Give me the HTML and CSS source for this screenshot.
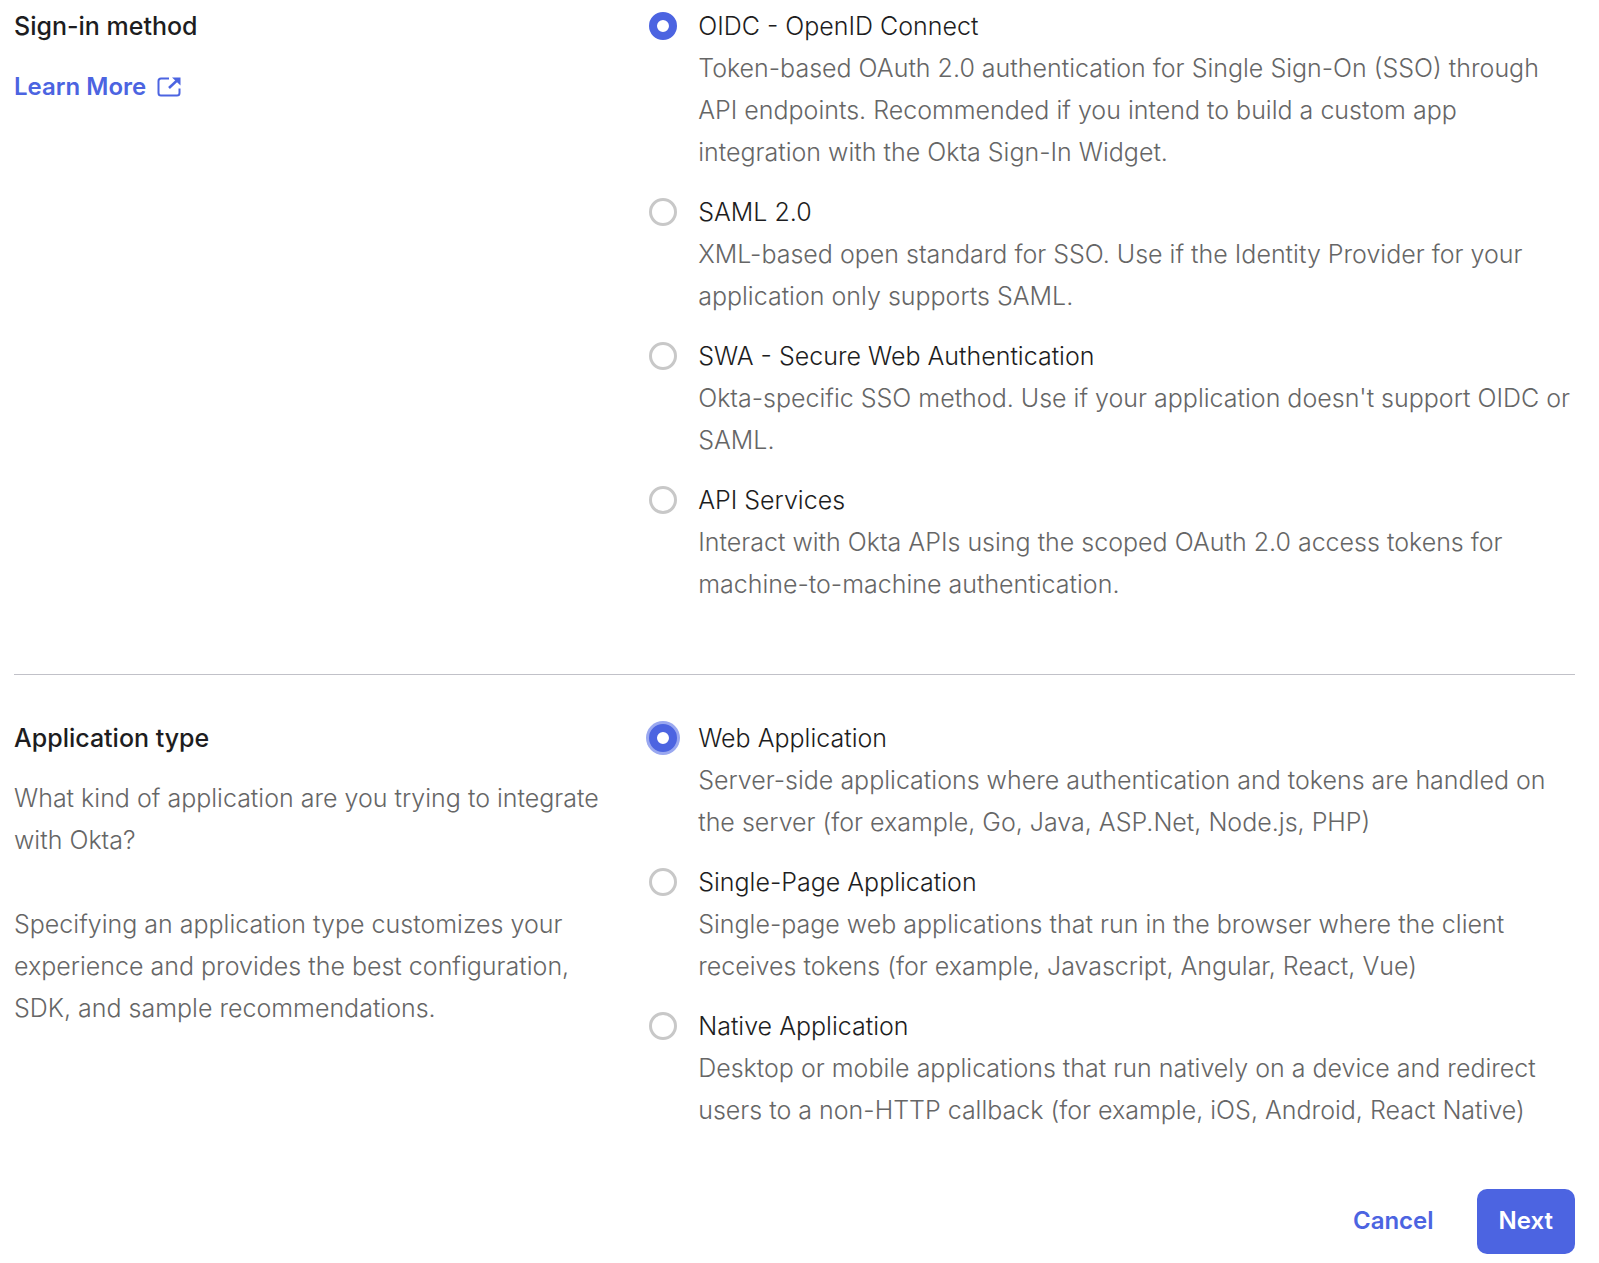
FILE: index.html
```
<!DOCTYPE html>
<html lang="en">
<head>
<meta charset="utf-8">
<meta name="viewport" content="width=device-width, initial-scale=1">
<title>Create a new app integration</title>
<link rel="stylesheet" href="styles.css">
</head>

<body>
<form class="wizard">
  <section class="section" role="radiogroup" aria-labelledby="method-title">
    <div class="intro">
      <h2 id="method-title">Sign-in method</h2>
      <a class="learn-more" href="#">Learn More
        <svg class="external" viewBox="0 0 24 20" aria-hidden="true">
          <path d="M12 1.500H4Q1.500 1.500 1.500 4V16Q1.500 18.500 4 18.500H20Q22.500 18.500 22.500 16V11.500" fill="none" stroke="currentColor" stroke-width="2"/>
          <path d="M12 11L20 3.500" fill="none" stroke="currentColor" stroke-width="2.500"/>
          <path d="M15 0.500H23.500V8.500Z" fill="currentColor"/>
        </svg>
      </a>
    </div>
    <div class="options">
      <div class="option">
        <input type="radio" name="method" id="oidc" aria-describedby="oidc-hint" checked>
        <div>
          <label for="oidc">OIDC - OpenID Connect</label>
          <p id="oidc-hint">Token-based OAuth 2.0 authentication for Single Sign-On (SSO) through API endpoints. Recommended if you intend to build a custom app integration with the Okta Sign-In Widget.</p>
        </div>
      </div>
      <div class="option">
        <input type="radio" name="method" id="saml" aria-describedby="saml-hint">
        <div>
          <label for="saml">SAML 2.0</label>
          <p id="saml-hint">XML-based open standard for SSO. Use if the Identity Provider for your application only supports SAML.</p>
        </div>
      </div>
      <div class="option">
        <input type="radio" name="method" id="swa" aria-describedby="swa-hint">
        <div>
          <label for="swa">SWA - Secure Web Authentication</label>
          <p id="swa-hint">Okta-specific SSO method. Use if your application doesn't support OIDC or SAML.</p>
        </div>
      </div>
      <div class="option">
        <input type="radio" name="method" id="api" aria-describedby="api-hint">
        <div>
          <label for="api">API Services</label>
          <p id="api-hint">Interact with Okta APIs using the scoped OAuth 2.0 access tokens for machine-to-machine authentication.</p>
        </div>
      </div>
    </div>
  </section>

  <section class="section" role="radiogroup" aria-labelledby="type-title">
    <div class="intro">
      <h2 id="type-title">Application type</h2>
      <p>What kind of application are you trying to integrate with Okta?</p>
      <p>Specifying an application type customizes your experience and provides the best configuration, SDK, and sample recommendations.</p>
    </div>
    <div class="options">
      <div class="option">
        <input type="radio" class="focused" name="apptype" id="web" aria-describedby="web-hint" checked>
        <div>
          <label for="web">Web Application</label>
          <p id="web-hint">Server-side applications where authentication and tokens are handled on the server (for example, Go, Java, ASP.Net, Node.js, PHP)</p>
        </div>
      </div>
      <div class="option">
        <input type="radio" name="apptype" id="spa" aria-describedby="spa-hint">
        <div>
          <label for="spa">Single-Page Application</label>
          <p id="spa-hint">Single-page web applications that run in the browser where the client receives tokens (for example, Javascript, Angular, React, Vue)</p>
        </div>
      </div>
      <div class="option">
        <input type="radio" name="apptype" id="native" aria-describedby="native-hint">
        <div>
          <label for="native">Native Application</label>
          <p id="native-hint">Desktop or mobile applications that run natively on a device and redirect users to a non-HTTP callback (for example, iOS, Android, React Native)</p>
        </div>
      </div>
    </div>
  </section>

  <div class="actions">
    <button type="button" class="btn">Cancel</button>
    <button type="submit" class="btn btn-primary">Next</button>
  </div>
</form>
</body>
</html>
```
FILE: styles.css
```
* {
  box-sizing: border-box;
}

body {
  margin: 0;
  background: #fff;
  color: #1d1d21;
  font: 300 25px/42px Inter, "Liberation Sans", sans-serif;
}

h2, p {
  margin: 0;
  font-size: inherit;
}

h2 {
  font-weight: 550;
}

p {
  color: #666;
}

.wizard {
  padding: 5px 24px 8px 14px;
}

.section {
  display: grid;
  grid-template-columns: 2fr 3fr;
  gap: 18px;
}

.section + .section {
  margin-top: 69px;
  padding-top: 42px;
  border-top: 1px solid #c1c1c8;
}

.intro h2 {
  margin-bottom: 18px;
}

.intro p + p {
  margin-top: 42px;
}

.learn-more {
  display: inline-flex;
  align-items: center;
  gap: 11px;
  color: #4c64e1;
  font-size: 24px;
  font-weight: 600;
  text-decoration: none;
}

.external {
  width: 24px;
  height: 20px;
}

.options {
  display: flex;
  flex-direction: column;
  gap: 18px;
}

.option {
  display: flex;
  align-items: flex-start;
  gap: 21px;
}

.option label {
  display: block;
}

.option input {
  flex: none;
  appearance: none;
  width: 28px;
  height: 28px;
  margin: 7px 0;
  border: 3px solid #c8c8c8;
  border-radius: 50%;
  background: #fff;
}

.option input:checked {
  border: 8px solid #4c64e1;
}

.option input.focused {
  box-shadow: 0 0 0 3px #9aa8f0;
}

.actions {
  display: flex;
  justify-content: flex-end;
  margin-top: 58px;
}

.btn {
  padding: 11px 22px 12px;
  border: 0;
  border-radius: 10px;
  background: none;
  color: #4c64e1;
  font: inherit;
  font-size: 24px;
  font-weight: 600;
}

.btn + .btn {
  margin-left: 21px;
}

.btn-primary {
  background: #4c64e1;
  color: #fff;
}
```
